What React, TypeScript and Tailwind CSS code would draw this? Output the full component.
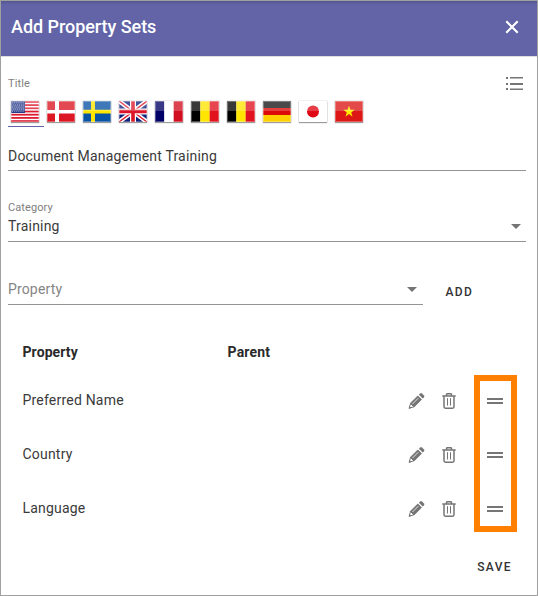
import React from "react";

function Shine() {
  return (
    <>
      <rect x="0" y="0" width="28" height="10" fill="#fff" opacity="0.22" />
      <rect x="0.5" y="0.5" width="27" height="20" fill="none" stroke="#fff" strokeOpacity="0.3" />
    </>
  );
}

function Bars({ colors, vertical }: { colors: string[]; vertical?: boolean }) {
  return (
    <>
      {colors.map((c, i) =>
        vertical ? (
          <rect key={i} x={(i * 28) / 3} y="0" width="9.4" height="21" fill={c} />
        ) : (
          <rect key={i} x="0" y={i * 7} width="28" height="7" fill={c} />
        )
      )}
    </>
  );
}

const flags: { name: string; art: React.ReactNode }[] = [
  {
    name: "English (US)",
    art: (
      <>
        <rect width="28" height="21" fill="#fff" />
        {[0, 1, 2, 3, 4, 5, 6].map((i) => (
          <rect key={i} y={i * 3.2} width="28" height="1.8" fill="#dd1a30" />
        ))}
        <rect width="14" height="12" fill="#283c8c" />
        {[0, 1, 2, 3, 4].map((r) =>
          [0, 1, 2, 3, 4, 5].map((c) => (
            <circle key={`${r}-${c}`} cx={1.6 + c * 2.1 + (r % 2 ? 0.6 : 0)} cy={1.8 + r * 2.1} r="0.5" fill="#fff" opacity="0.7" />
          ))
        )}
      </>
    ),
  },
  {
    name: "Danish",
    art: (
      <>
        <rect width="28" height="21" fill="#dc1622" />
        <path d="M8 0h4v21H8zM0 9h28v3.5H0z" fill="#fff" />
      </>
    ),
  },
  {
    name: "Swedish",
    art: (
      <>
        <rect width="28" height="21" fill="#0853a5" />
        <path d="M8 0h4v21H8zM0 8.8h28v3.6H0z" fill="#ffe600" />
      </>
    ),
  },
  {
    name: "English (UK)",
    art: (
      <>
        <rect width="28" height="21" fill="#10217c" />
        <path d="M0 0L28 21M28 0L0 21" stroke="#fff" strokeWidth="4.4" />
        <path d="M0 0L28 21M28 0L0 21" stroke="#dc1628" strokeWidth="1.4" />
        <path d="M14 0v21M0 10.5h28" stroke="#fff" strokeWidth="6" />
        <path d="M14 0v21M0 10.5h28" stroke="#dc1628" strokeWidth="3.6" />
      </>
    ),
  },
  { name: "French", art: <Bars vertical colors={["#000066", "#ffffff", "#d20f20"]} /> },
  { name: "Flemish", art: <Bars vertical colors={["#000000", "#ffe500", "#e0131f"]} /> },
  { name: "Walloon", art: <Bars vertical colors={["#000000", "#ffe500", "#e0131f"]} /> },
  { name: "German", art: <Bars colors={["#181818", "#dd0a0a", "#ffd000"]} /> },
  {
    name: "Japanese",
    art: (
      <>
        <rect width="28" height="21" fill="#fff" />
        <circle cx="14" cy="10.5" r="6" fill="#e00814" />
      </>
    ),
  },
  {
    name: "Vietnamese",
    art: (
      <>
        <rect width="28" height="21" fill="#dc1715" />
        <path d="M14 4.7l1.4 4.1h4.2l-3.4 2.6 1.3 4.3-3.5-2.6-3.5 2.6 1.3-4.3-3.4-2.6h4.2z" fill="#ffee00" />
      </>
    ),
  },
];

function Flag({ art, name }: { art: React.ReactNode; name: string }) {
  return (
    <svg role="img" aria-label={name} width="28" height="21" viewBox="0 0 28 21" className="shadow-[0_1px_1px_rgba(0,0,0,0.35),0_0_1px_rgba(0,0,0,0.35)]">
      {art}
      <Shine />
    </svg>
  );
}

function Caret() {
  return (
    <svg width="10" height="5" viewBox="0 0 10 5" fill="#757575">
      <path d="M0 0h10L5 5z" />
    </svg>
  );
}

function Pencil() {
  return (
    <svg width="18" height="18" viewBox="0 0 18 18" fill="none" stroke="#757575">
      <path d="M1.2 16.2l1.4-4.8 3.4 3.4z" strokeWidth="1" fill="#fff" />
      <path d="M.7 16.7l.8-2.6 1.8 1.8z" fill="#757575" stroke="none" />
      <path d="M2.4 11.3L9.8 3.9l3.7 3.7-7.4 7.4z" fill="#757575" strokeWidth=".8" />
      <path d="M4.5 12l5.8-5.8" stroke="#fff" strokeWidth=".8" />
      <path d="M10.9 2.7l1.3-1.3q.9-.8 1.8 0l2 2q.8.9 0 1.8l-1.3 1.3z" fill="#757575" stroke="none" />
    </svg>
  );
}

function Trash() {
  return (
    <svg width="14" height="16" viewBox="0 0 14 16" fill="none" stroke="#757575" strokeWidth="1.5">
      <path d="M.3 2.9h13.4M4.5 3V1.7q0-1 1-1h3q1 0 1 1V3M2 3v10.8q0 1.4 1.4 1.4h7.2q1.4 0 1.4-1.4V3" />
      <path d="M5.5 5.2v7.3M8.5 5.2v7.3" strokeWidth="1" />
    </svg>
  );
}

export default function App() {
  return (
    <div className="relative flex h-[596px] w-[538px] flex-col border border-[#a0a0a0] bg-white font-[Roboto,sans-serif] text-sm tracking-[0.2px] text-[#3a3a3a]">
      <header className="flex h-14 shrink-0 items-center justify-between border-b border-[#dddde2] bg-[#6264a7] bg-[linear-gradient(#54568f,#6264a7_4px)] pr-[18px] pl-[10px] text-white">
        <h1 className="mt-[-3px] text-lg font-medium tracking-[-0.05px]">Add Property Sets</h1>
        <svg width="14" height="14" viewBox="0 0 14 14" className="mt-[-3px]" stroke="#fff" strokeWidth="2.2">
          <path d="M1.3 1.3l11.4 11.4M12.7 1.3L1.3 12.7" />
        </svg>
      </header>

      <main className="flex flex-col pr-[11px] pl-[7px]">
        <div className="mt-[19px] flex h-4 items-center justify-between text-[11px] tracking-[0.1px] text-[#808080]">
          <label>Title</label>
          <svg width="17" height="14" viewBox="0 0 17 14" fill="#757575" className="mr-[3px]">
            <path d="M0 0h2v2H0zM4 0h13v1.5H4zM0 6h2v2H0zM4 6h13v2H4zM0 11h2v2H0zM4 11.5h13V13H4z" />
          </svg>
        </div>
        <div className="mt-[9px] flex h-[26px]">
          {flags.map((f, i) => (
            <button key={f.name} className={`flex w-9 items-start border-b pl-[3.4px] ${i === 0 ? "border-[#6264a7]" : "border-transparent"}`}>
              <Flag art={f.art} name={f.name} />
            </button>
          ))}
        </div>
        <div className="mt-4 flex h-7 items-center border-b border-[#949494] pb-[2px]">Document Management Training</div>

        <label className="mt-[29px] h-4 text-[11px] leading-4 tracking-[0.1px] text-[#808080]">Category</label>
        <div className="flex h-[26px] items-center justify-between border-b border-[#949494] pr-[5px] pb-[5px]">
          <span>Training</span>
          <Caret />
        </div>

        <div className="mt-[32px] flex h-[31px]">
          <div className="flex w-[415px] items-center justify-between border-b border-[#949494] pr-[6px] text-[#858585]">
            <span className="tracking-[0.15px]">Property</span>
            <Caret />
          </div>
          <button className="ml-[22.5px] pt-[6px] text-[12px] font-medium tracking-[1.3px] text-[#333]">ADD</button>
        </div>

        <div className="mt-[34px] flex h-[26px] items-center pl-[14.5px] font-bold text-[#2a2a2a]">
          <span className="w-[205px] tracking-[0.1px]">Property</span>
          <span>Parent</span>
        </div>
        <div className="mt-2">
          {["Preferred Name", "Country", "Language"].map((name) => (
            <div key={name} className="flex h-[54px] items-center pl-[14.5px]">
              <span className="w-[385.5px]">{name}</span>
              <div className="flex items-center pt-[2px]">
                <Pencil />
                <span className="ml-4">
                  <Trash />
                </span>
                <span className="ml-[31px] flex h-[6px] w-4 flex-col border-y-2 border-[#757575]" />
              </div>
            </div>
          ))}
        </div>
        <button className="mt-[23px] mr-[14px] h-5 self-end text-[12px] font-medium tracking-[1.4px] text-[#333]">SAVE</button>
      </main>

      <div className="pointer-events-none absolute top-[374px] left-[473px] h-[157px] w-[43px] border-6 border-[#ff8000]" />
    </div>
  );
}
